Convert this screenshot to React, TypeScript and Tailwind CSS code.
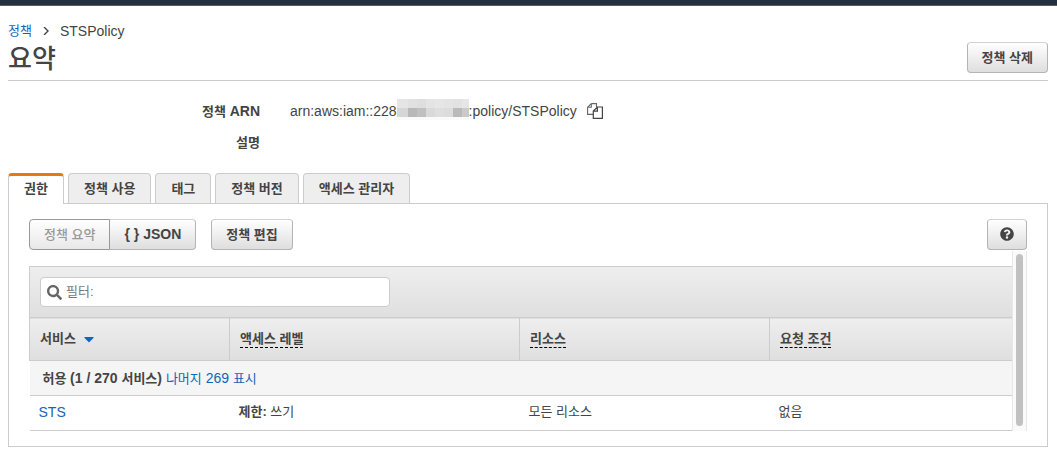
import { useState } from "react";
import type { ReactNode } from "react";
import { FaCaretDown, FaQuestionCircle, FaSearch } from "react-icons/fa";

const raised =
  "h-[31px] border border-[#b4b4b4] border-t-[#d2d2d2] bg-linear-to-b from-white to-[#dedede] font-bold";

function Latin({ children }: { children: ReactNode }) {
  return <span className="text-sm leading-5">{children}</span>;
}

const mosaicColumns = [
  { x: 0, width: 11, top: "#e5e5e5", bottom: "#d6d6d6" },
  { x: 11, width: 9, top: "#e1e1e1", bottom: "#b8b8b8" },
  { x: 20, width: 9, top: "#dedede", bottom: "#c0c0c0" },
  { x: 29, width: 9, top: "#e4e4e4", bottom: "#d9d9d9" },
  { x: 38, width: 9, top: "#e6e6e6", bottom: "#dedede" },
  { x: 47, width: 9, top: "#e4e4e4", bottom: "#dcdcdc" },
  { x: 56, width: 9, top: "#e2e2e2", bottom: "#bababa" },
  { x: 65, width: 7, top: "#e6e6e6", bottom: "#cacaca" },
];

function MaskedDigits() {
  return (
    <svg className="h-6 w-[72px]" viewBox="0 0 72 24" shapeRendering="crispEdges" aria-hidden="true">
      {mosaicColumns.map(({ x, width, top, bottom }) => (
        <g key={x}>
          <rect x={x} width={width} height="9" fill={top} />
          <rect x={x} y="9" width={width} height="9" fill={bottom} />
        </g>
      ))}
      <rect y="18" width="72" height="3" fill="#fafafa" />
    </svg>
  );
}

function CopyIcon() {
  return (
    <svg className="h-4 w-4" viewBox="0 0 16 16" fill="none" aria-hidden="true">
      <path d="M4.3 0.6H9.5V4M4.3 0.6L0.6 4.3V11.4H6M4.3 0.6V4.3H0.6" stroke="#666" strokeWidth="1.1" />
      <path d="M10.4 4H15.4V15.4H6.3V8L10.4 4ZM10.4 4V8.2H6.3" stroke="#444" strokeWidth="1.2" />
    </svg>
  );
}

const tabs = ["권한", "정책 사용", "태그", "정책 버전", "액세스 관리자"];
const columns = ["액세스 레벨", "리소스", "요청 조건"];

export default function App() {
  const [active, setActive] = useState(0);

  return (
    <div className="bg-white font-['Liberation_Sans','Noto_Sans_CJK_KR',sans-serif] text-[13px] leading-5 text-[#444]">
      <div className="h-[6px] border-b border-[#5b5b68] bg-[#232f3e]" />
      <main className="px-2 pr-[9px] pt-[15px]">
        <header className="flex items-end justify-between border-b border-[#ccc] pb-[7px]">
          <div>
            <nav className="flex h-5 items-center" aria-label="breadcrumb">
              <a href="#policies" className="text-[#1166bb]">정책</a>
              <svg className="mx-[10px] h-2 w-[8px]" viewBox="0 0 8 8" fill="none" stroke="#444" strokeWidth="1.4" aria-hidden="true">
                <path d="M2 0L6 4L2 8" />
              </svg>
              <Latin>STSPolicy</Latin>
            </nav>
            <h1 className="pt-[2px] pb-[2px] font-['Noto_Sans_CJK_KR',sans-serif] text-[26px] leading-7 font-medium">요약</h1>
          </div>
          <button type="button" className={`${raised} rounded-[4px] px-[14px]`}>정책 삭제</button>
        </header>

        <dl className="grid auto-rows-[20px] grid-cols-[252px_1fr] gap-x-[30px] gap-y-3 py-5">
          <dt className="text-right font-bold">정책 <Latin>ARN</Latin></dt>
          <dd className="flex items-center">
            <Latin>arn:aws:iam::228</Latin>
            <MaskedDigits />
            <Latin>:policy/STSPolicy</Latin>
            <button type="button" aria-label="ARN 복사" className="ml-[10px]"><CopyIcon /></button>
          </dd>
          <dt className="text-right font-bold">설명</dt>
          <dd />
        </dl>

        <div role="tablist" className="flex items-end gap-1">
          {tabs.map((tab, i) => (
            <button
              key={tab}
              type="button"
              role="tab"
              aria-selected={i === active}
              onClick={() => setActive(i)}
              className={
                i === active
                  ? "relative -mb-px h-[31px] rounded-t-[4px] border border-b-0 border-t-[3px] border-[#ccc] border-t-[#e47911] bg-white px-[15px] pb-[3px] font-bold"
                  : "h-[30px] rounded-t-[4px] border border-b-0 border-[#ccc] bg-[#eee] px-[15px] font-bold"
              }
            >
              {tab}
            </button>
          ))}
        </div>

        <section className="border border-[#ccc] px-5 py-[15px]">
          <div className="flex items-center">
            <button type="button" className="h-[31px] rounded-l-[4px] border border-[#999] bg-linear-to-b from-white to-[#e8e8e8] px-[14px] font-medium text-[#999]">
              정책 요약
            </button>
            <button type="button" className={`${raised} rounded-r-[4px] border-l-0 px-[14px]`}>
              <Latin>{"{ } JSON"}</Latin>
            </button>
            <button type="button" className={`${raised} ml-[15px] rounded-[4px] px-[14px]`}>정책 편집</button>
            <button type="button" aria-label="도움말" className={`${raised} ml-auto flex w-10 items-center justify-center rounded-[4px] pb-px`}>
              <FaQuestionCircle className="h-[14px] w-[14px]" />
            </button>
          </div>

          <div className="flex">
            <div className="mt-4 min-w-0 flex-1">
              <div className="border-t border-l border-[#ccc] bg-linear-to-b from-[#eee] to-[#dfdfdf] px-[10px] py-[10px]">
                <label className="flex h-[30px] w-[350px] items-center gap-1 rounded-[4px] border border-[#ccc] bg-white px-[6px]">
                  <FaSearch className="h-[15px] w-[15px] text-[#666]" aria-hidden="true" />
                  <input aria-label="필터" placeholder="필터:" className="min-w-0 flex-1 outline-none placeholder:text-[#777]" />
                </label>
              </div>
              <table className="w-full table-fixed border-collapse text-left">
                <thead>
                  <tr className="h-[43px] border-y border-[#ccc] bg-linear-to-b from-[#eee] to-[#dfdfdf]">
                    <th scope="col" className="w-[200px] border-l border-[#ccc] px-[10px]">
                      <button type="button" className="flex items-center gap-2 font-bold">
                        서비스 <FaCaretDown className="h-4 w-[10px] text-[#1166bb]" />
                      </button>
                    </th>
                    {columns.map((name, i) => (
                      <th key={name} scope="col" className={`border-l border-[#ccc] px-[10px] ${i === 0 ? "w-[290px]" : i === 1 ? "w-[250px]" : ""}`}>
                        <span className="border-b border-dashed border-black pb-px">{name}</span>
                      </th>
                    ))}
                  </tr>
                </thead>
                <tbody>
                  <tr className="h-[35px] border-b border-[#ccc] bg-[#f5f5f5]">
                    <td colSpan={4} className="px-[13px]">
                      <b>허용 <Latin>(1 / 270 </Latin>서비스<Latin>) </Latin></b>
                      <a href="#services" className="text-[#1166bb]">나머지<Latin> 269 </Latin>표시</a>
                    </td>
                  </tr>
                  <tr className="h-[35px] border-b border-[#ccc]">
                    <td className="px-[9px] pb-[2px]"><a href="#sts" className="text-[#1166bb]"><Latin>STS</Latin></a></td>
                    <td className="px-[9px] pb-[2px]"><b>제한:</b> 쓰기</td>
                    <td className="px-[9px] pb-[2px]">모든 리소스</td>
                    <td className="px-[9px] pb-[2px]">없음</td>
                  </tr>
                </tbody>
              </table>
            </div>
            <div className="mt-px w-[15px] border-x border-[#e8e8e8] bg-[#fafafa] px-[3px] pt-[3px] pb-[5px]" aria-hidden="true">
              <div className="h-full rounded-full bg-[#c1c1c1]" />
            </div>
          </div>
        </section>
      </main>
    </div>
  );
}
